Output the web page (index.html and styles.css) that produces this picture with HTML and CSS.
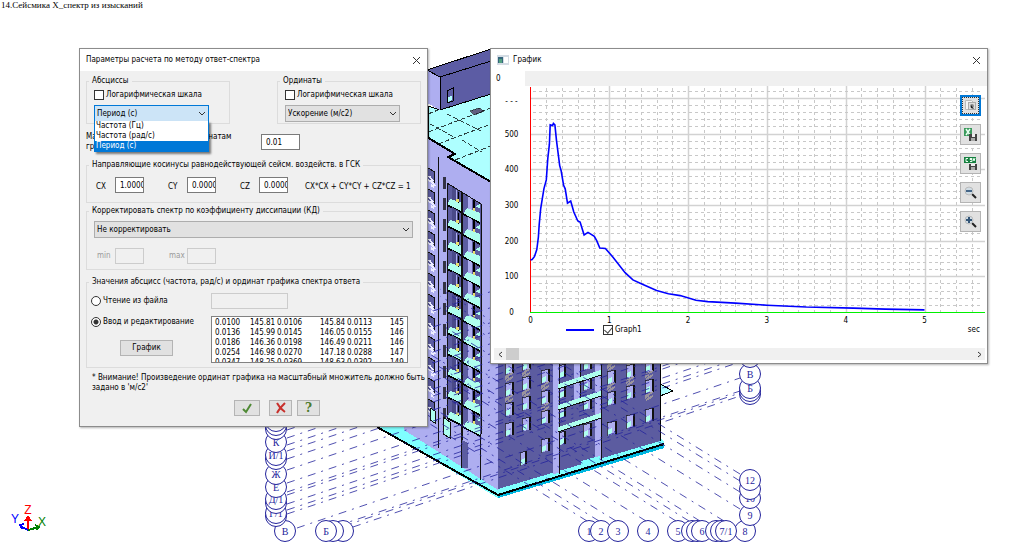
FILE: index.html
```html
<!DOCTYPE html>
<html lang="ru">
<head>
<meta charset="utf-8">
<title>Параметры расчета по методу ответ-спектра</title>
<link rel="stylesheet" href="styles.css">
</head>
<body>
<main class="desktop">
  <svg class="scene" id="scene" aria-hidden="true">
    <g stroke="#000" stroke-width="1">
      <polygon fill="#7fffff" stroke="none" points="376,426 410,426 497,482 660,438 664,441 664,447 498,498"/>
      <path fill="none" stroke="#00b8e0" stroke-width="4" d="M498 496L664 446"/>
      <path fill="none" stroke-width="2" d="M377 427L498 495L664 444"/>
      <polygon fill="#aeffff" points="428,106 440,110 491,92 491,182 455,161 448,157 455,154 428,137"/>
      <path fill="none" stroke-opacity=".75" d="M428 114l10-4M447 114l34 17M428 132l63-24M438 144l53-20M462 140l20 12M455 160l36-14M430 124l24 13" stroke-dasharray="5 2"/>
      <path fill="#606080" d="M470 111l9-3 5 3-10 4z" stroke-opacity=".6"/>
      <polygon fill="#5c5ca4" points="427,70 491,49 491,94 440,110 440,77"/>
      <polygon fill="#aeaef0" stroke="none" points="427,70 440,77 440,110 427,103"/>
      <path fill="none" d="M427 70l13 7 51-16M440 77v33M447 91l6-3v13l-6 2z"/>
      <path fill="#aeffff" stroke="none" d="M448 97l4-1v4l-4 2z"/>
      <polygon fill="#aeaef0" stroke="none" points="427,137 455,154 448,157 455,161 498,186 498,490 404,430 404,426 427,426"/>
      <path fill="none" d="M427 137l28 17-7 3 7 4 43 25" stroke-width="2"/>
      <polygon fill="#5c5ca0" stroke="none" points="498,300 660,300 660,441 498,489"/>
      <path fill="none" d="M660 364v77"/>
      <polygon fill="#aeffff" points="660,384 673,391 660,396"/>
    </g>
    <g id="facade"></g>
    <g id="axes" class="axes"></g>
    <g id="bubbles" class="bubbles"></g>
    <g class="triad" fill="none" stroke-width="2">
      <path stroke="#f00" d="M28 530v-11M25 521l3-4 3 4"/>
      <path stroke="#00f" d="M28 530l-8-4M24 524l-4 1 2 4"/>
      <path stroke="#008000" d="M28 530l11-3M35 525l4 2-3 3"/>
      <text x="28" y="514" fill="#f00">Z</text>
      <text x="15" y="523" fill="#00f">Y</text>
      <text x="42" y="526" fill="#008000">X</text>
    </g>
  </svg>
  <p class="caption">14.Сейсмика X_спектр из изысканий</p>

  <section class="window params" aria-label="Параметры расчета">
    <header class="titlebar">
      <h1>Параметры расчета по методу ответ-спектра</h1>
      <button class="close" aria-label="Закрыть"><svg width="9" height="9"><path d="M1 1l7 7M8 1l-7 7"/></svg></button>
    </header>
    <form class="body">
      <div class="pair">
        <fieldset class="axis">
          <legend>Абсциссы</legend>
          <label class="check"><input type="checkbox">Логарифмическая шкала</label>
          <div class="combo open">
            <select aria-label="Абсциссы"><option>Период (с)</option><option>Частота (Гц)</option><option>Частота (рад/с)</option></select>
            <svg class="chev" width="8" height="5"><path d="M1 1l3 3 3-3"/></svg>
            <ul class="menu" role="listbox">
              <li role="option">Частота (Гц)</li>
              <li role="option">Частота (рад/с)</li>
              <li role="option" class="chosen" aria-selected="true">Период (с)</li>
            </ul>
          </div>
        </fieldset>
        <fieldset class="axis">
          <legend>Ординаты</legend>
          <label class="check"><input type="checkbox">Логарифмическая шкала</label>
          <div class="combo">
            <select aria-label="Ординаты"><option>Ускорение (м/с2)</option></select>
            <svg class="chev" width="8" height="5"><path d="M1 1l3 3 3-3"/></svg>
          </div>
        </fieldset>
      </div>
      <div class="scale">
        <label for="mul">Масштабный множитель к ординатам<br>графика</label>
        <input id="mul" type="text" value="0.01">
      </div>
      <fieldset class="cosines">
        <legend>Направляющие косинусы равнодействующей сейсм. воздейств. в ГСК</legend>
        <label for="cx">CX</label><input id="cx" type="text" value="1.0000">
        <label for="cy">CY</label><input id="cy" type="text" value="0.0000">
        <label for="cz">CZ</label><input id="cz" type="text" value="0.0000">
        <span class="formula">CX*CX + CY*CY + CZ*CZ = 1</span>
      </fieldset>
      <fieldset class="damping">
        <legend>Корректировать спектр по коэффициенту диссипации (КД)</legend>
        <div class="combo">
          <select aria-label="Корректировать спектр"><option>Не корректировать</option></select>
          <svg class="chev" width="8" height="5"><path d="M1 1l3 3 3-3"/></svg>
        </div>
        <div class="limits">
          <label for="min">min</label><input id="min" type="text" disabled>
          <label for="max">max</label><input id="max" type="text" disabled>
        </div>
      </fieldset>
      <fieldset class="values">
        <legend>Значения абсцисс (частота, рад/с) и ординат графика спектра ответа</legend>
        <label class="check"><input type="radio" name="src">Чтение из файла</label>
        <input class="file" type="text" aria-label="Файл" disabled>
        <div class="editing">
          <label class="check"><input type="radio" name="src" checked>Ввод и редактирование</label>
          <button type="button" class="plot-btn">График</button>
        </div>
        <div class="list">
          <table>
            <tr><td>0.0100</td><td>145.81</td><td>0.0106</td><td>145.84</td><td>0.0113</td><td>145</td></tr>
            <tr><td>0.0136</td><td>145.99</td><td>0.0145</td><td>146.05</td><td>0.0155</td><td>146</td></tr>
            <tr><td>0.0186</td><td>146.36</td><td>0.0198</td><td>146.49</td><td>0.0211</td><td>146</td></tr>
            <tr><td>0.0254</td><td>146.98</td><td>0.0270</td><td>147.18</td><td>0.0288</td><td>147</td></tr>
            <tr><td>0.0347</td><td>148.25</td><td>0.0369</td><td>148.63</td><td>0.0392</td><td>149</td></tr>
          </table>
        </div>
      </fieldset>
      <p class="note">* Внимание! Произведение ординат графика на масштабный множитель должно быть<br>задано в 'м/с2'</p>
      <div class="actions">
        <button type="button" class="ok" aria-label="OK"><svg width="12" height="12" fill="none" stroke="#4f8a35" stroke-width="2"><path d="M2 7l3 3 5-8"/></svg></button>
        <button type="button" aria-label="Отмена"><svg width="12" height="12" fill="none" stroke="#c8302c" stroke-width="2"><path d="M2 1c2 4 5 7 8 9M10 1c-3 3-6 6-8 10"/></svg></button>
        <button type="button" class="help" aria-label="Справка">?</button>
      </div>
    </form>
  </section>

  <section class="window graph" aria-label="График">
    <header class="titlebar">
      <svg class="app" width="12" height="10"><path fill="#d4dce4" d="M0 0h12v10H0z"/><path fill="#35667c" d="M1 2h5v6H1z"/><path fill="#52a080" d="M2 4h3v4H2z"/><path fill="#fff" d="M7 2h4v6H7z"/></svg>
      <h2>График</h2>
      <button class="close" aria-label="Закрыть"><svg width="9" height="9"><path d="M1 1l7 7M8 1l-7 7"/></svg></button>
    </header>
    <div class="tabs"><button class="tab">0</button></div>
    <div class="chart">
      <svg id="plot" class="plot" viewBox="0 0 496 239" role="img" aria-label="Graph1"></svg>
      <div class="tools">
        <button class="focused" aria-label="Снимок"><svg width="13" height="13"><path fill="#f4f4f4" stroke="#bbb" d="M1.500 1.500h6l2 2v7h-8z"/><rect x="4.500" y="3.500" width="7" height="7" fill="#ddd" stroke="#aaa"/><circle cx="8" cy="7" r="2" fill="#888"/><path fill="#222" d="M7 6l3 4-3-1z"/></svg></button>
        <button aria-label="Excel"><svg width="13" height="13"><path fill="#3a9a5c" d="M0 0h8v8H0z"/><path stroke="#e8fff0" stroke-width="1.5" d="M2 1l4 6M6 1L2 7"/><path fill="#444" d="M5 6h8v7H5z"/><path fill="#eee" d="M8 6h3v3H8z"/><path fill="#aaa" d="M7 10h4v3H7z"/></svg></button>
        <button aria-label="CSV"><svg width="13" height="13"><path fill="#16803f" d="M0 0h12v6H0z"/><path fill="none" stroke="#e8fff0" d="M4 1.500H2v3h2M8 1.500H6v1h2v2H6M9 1l1 3 1-3"/><path fill="#444" d="M5 7h8v6H5z"/><path fill="#eee" d="M7 7h4v2H7z"/><path fill="#aaa" d="M7 10h4v3H7z"/></svg></button>
        <button aria-label="Уменьшить"><svg width="13" height="13"><path stroke="#222" stroke-width="2" d="M8 8l4 4"/><circle cx="5" cy="5" r="4" fill="#d0dce4" stroke="#bbb"/><path stroke="#468" stroke-width="2" d="M2 5h6"/></svg></button>
        <button aria-label="Увеличить"><svg width="13" height="13"><path stroke="#222" stroke-width="2" d="M8 8l4 4"/><circle cx="5" cy="5" r="4" fill="#d0dce4" stroke="#bbb"/><path stroke="#357" stroke-width="2" d="M2 5h6M5 2v6"/></svg></button>
      </div>
    </div>
    <div class="legend">
      <i class="swatch"></i>
      <label class="check"><input type="checkbox" checked>Graph1</label>
      <span class="unit">sec</span>
    </div>
    <div class="scroll"><button aria-label="Влево"><svg width="5" height="7"><path d="M4 1L1 3.500 4 6"/></svg></button><i class="thumb"></i><button class="right" aria-label="Вправо"><svg width="5" height="7"><path d="M1 1l3 2.500L1 6"/></svg></button></div>
  </section>
</main>
<script src="draw.js"></script>
</body>
</html>
```
FILE: styles.css
```css
* { box-sizing: border-box; }
body {
  margin: 0;
  background: #fff;
  color: #000;
  font: 8px/10px "DejaVu Sans Condensed", "DejaVu Sans", sans-serif;
}
.desktop { position: relative; min-height: 100vh; overflow: hidden; }
.scene { position: absolute; inset: 0; width: 100%; height: 100%; shape-rendering: crispEdges; }
.axes { fill: none; stroke: #24249c; stroke-opacity: .8; stroke-dasharray: 8 6 2 6; shape-rendering: auto; }
.bubbles circle { fill: #fff; stroke: #24249c; shape-rendering: auto; }
.bubbles text { fill: #24249c; font: 10px "Liberation Serif", serif; text-anchor: middle; }
.triad text { font: 12px "Liberation Sans", sans-serif; text-anchor: middle; stroke: none; }
.caption { position: relative; margin: 0; padding-left: 1px; font: 9px/10px "Liberation Serif", serif; }

button, input, select { font: inherit; color: inherit; margin: 0; }
button { padding: 0; border: 1px solid #b4b4b4; background: #e1e1e1; display: inline-flex; align-items: center; justify-content: center; }
input[type="text"] { height: 16px; padding: 0 0 0 4px; border: 1px solid #7a7a7a; background: #fff; flex: none; border-radius: 0; }
input[type="text"]:disabled { background: #f0f0f0; border-color: #ccc; }

.window { position: absolute; top: 48px; border: 1px solid #8c8c8c; background: #f0f0f0; box-shadow: 1px 1px 2px rgba(0, 0, 0, .3); }
.params { left: 79px; width: 349px; }
.graph { left: 490px; width: 498px; background: #fff; }
.titlebar { display: flex; align-items: center; height: 22px; padding: 0 6px; background: #fff; }
.titlebar h1, .titlebar h2 { margin: 0; font: inherit; }
.close { margin-left: auto; border: 0; background: none; }
.close svg, .chev, .scroll svg { fill: none; stroke: #333; }
.app { margin-right: 4px; }

.body { padding: 5px 6px 10px; }
fieldset { margin: 0; min-width: 0; padding: 0 7px; border: 1px solid #dcdcdc; }
legend { margin-left: -5px; padding: 0 3px; line-height: 10px; }
.pair { display: flex; justify-content: space-between; }
.axis { width: 144px; padding: 4px 7px 1px; }
.axis .combo { width: 115px; margin-top: 5px; }
.check { display: flex; align-items: center; gap: 2px; height: 10px; white-space: nowrap; }
.check input { appearance: none; display: grid; place-content: center; width: 10px; height: 10px; border: 1px solid #333; background: #fff; flex: none; }
.check input[type="radio"] { border-radius: 50%; }
.check input[type="radio"]:checked { background: radial-gradient(circle, #333 0 2px, #fff 3px); }
.check input[type="checkbox"]:checked::after { content: ""; width: 4px; height: 7px; margin-bottom: 2px; border: solid #444; border-width: 0 1px 1px 0; transform: rotate(40deg); }

.combo { position: relative; }
.combo select { display: block; width: 100%; height: 17px; padding: 0 2px; border: 1px solid #adadad; border-radius: 0; background: #e1e1e1; appearance: none; }
.open select { background: #cce4f7; border-color: #0078d7; }
.chev { position: absolute; right: 3px; top: 6px; }
.menu { position: absolute; z-index: 1; left: 0; right: 0; top: 16px; margin: 0; padding: 0; list-style: none; background: #fff; border: 1px solid #0078d7; border-width: 0 1px 1px; box-shadow: 2px 2px 2px rgba(0, 0, 0, .5); }
.menu li { padding-left: 1px; }
.menu .chosen { background: #0078d7; color: #fff; }

.scale { display: flex; align-items: center; margin-top: 8px; }
.scale label { width: 175px; white-space: nowrap; }
.scale input { width: 39px; }
.cosines { margin-top: 8px; padding: 7px 7px 9px; display: flex; align-items: flex-start; }
.cosines label { flex: none; padding: 5px 0 0 2px; width: 21px; }
.cosines input, .limits input { width: 29px; margin-right: 22px; }
.formula { margin-left: -5px; padding-top: 5px; white-space: nowrap; }
.damping { margin-top: 3px; padding: 5px 7px 5px; }
.limits { display: flex; align-items: center; margin-top: 10px; color: #9a9a9a; }
.limits label { flex: none; width: 21px; padding-left: 3px; }
.values { display: grid; grid-template-columns: 120px 197px; row-gap: 7px; margin-top: 7px; padding: 6px 4px 4px; }
.values legend { margin-left: -2px; }
.values > .check { margin-top: 3px; }
.file { width: 77px; }
.editing .check { margin-top: 1px; }
.plot-btn { width: 53px; height: 16px; margin: 13px 0 0 29px; }
.list { height: 47px; padding: 1px 3px; background: #fff; border: 1px solid #828282; overflow: hidden; }
.list table { border-collapse: collapse; table-layout: fixed; width: 190px; }
.list td { padding: 0; width: 35px; white-space: nowrap; }
.list td:nth-child(2) { width: 27px; }
.list td:nth-child(3), .list td:nth-child(5) { width: 43px; }
.list td:nth-child(4) { width: 27px; }
.note { margin: 5px 0 0; padding: 0 0 0 6px; white-space: nowrap; }
.actions { display: flex; justify-content: center; margin-top: 7px; padding-left: 47px; }
.actions button { width: 23px; height: 16px; margin-right: 5px; }
.actions .ok { width: 26px; margin-right: 9px; }
.actions .help { margin-right: 0; color: #4d7a2c; font: bold 12px/12px "DejaVu Serif", serif; }

.tabs { display: flex; height: 15px; background: #f0f0f0; }
.tab { width: 34px; border: 0; background: #fff; justify-content: flex-start; padding-left: 5px; }
.chart { position: relative; }
.plot { display: block; width: 100%; }
.plot text { text-anchor: middle; }
.tools { position: absolute; right: 6px; top: 9px; display: flex; flex-direction: column; gap: 8px; }
.tools button { width: 21px; height: 21px; }
.tools .focused { border: 2px solid #0078d7; outline: 1px dotted #333; outline-offset: -3px; }
.legend { display: flex; align-items: center; padding: 0 7px 0 75px; }
.legend .check { margin-left: 9px; }
.swatch { width: 28px; height: 2px; background: #00f; }
.unit { margin-left: auto; }
.scroll { display: flex; align-items: stretch; height: 12px; margin: 13px 2px 3px 3px; background: #f0f0f0; }
.scroll button { width: 12px; border: 0; background: none; }
.scroll .right { margin-left: auto; }
.thumb { width: 13px; background: #cdcdcd; }
```
FILE: draw.js
```js
const out = (id, html) => { document.getElementById(id).innerHTML = html; };
const poly = (pts, fill, extra = '') => `<polygon points="${pts}" fill="${fill}" ${extra}/>`;
const line = (x1, y1, x2, y2, extra = '') => `<path d="M${x1} ${y1}L${x2} ${y2}" ${extra}/>`;

// Building facades
let f = '';
const wall = '#5c5ca0', lav = '#aeaef0', slab = '#aeffee';
f += poly('447,183 481,204 481,434 447,415', wall);
for (let k = 0; k < 13; k++) {
  const y = 168 + k * 21;
  if (y < 410) {
    f += poly(`428,${y} 435,${y + 4} 435,${y + 15} 428,${y + 11}`, wall);
    f += `<path d="M428 ${y}l7 4M434.500 ${y + 4}v11" stroke="#111" fill="none"/>`;
    f += `<path d="M428 ${y + 12}l4 2 3 4M429 ${y + 8}l4 5M431 ${y + 17}l3 2" stroke="#eef" stroke-width="2" fill="none"/>`;
    f += `<path d="M444.500 ${y + 9}v12" stroke="#334" stroke-width="3"/>`;
  }
}
for (let k = 0; k < 11; k++) {
  const y = Math.round(204 + k * 21.3);
  f += poly(`452,${y - 18} 460,${y - 13} 460,${y} 452,${y - 4}`, '#4a4a88');
  f += poly(`468,${y - 8} 472,${y - 6} 472,${y + 8} 468,${y + 5}`, lav);
  f += poly(`450,${y - 5} 461,${y - 2} 461,${y + 7} 447,${y + 1}`, slab);
  f += poly(`467,${y + 4} 480,${y + 9} 480,${y + 19} 463,${y + 10}`, slab);
  f += line(447, y + 1, 461, y + 8, 'stroke="#000" stroke-width="1.5"') + line(463, y + 10, 480, y + 19, 'stroke="#000" stroke-width="1.5"');
  f += line(456.5, y - 14, 456.5, y - 4, `stroke="${lav}" stroke-width="1"`);
  f += line(458.5, y - 12, 458.5, y - 1, 'stroke="#000" stroke-width="1"');
  f += line(473.5, y - 5, 473.5, y + 7, 'stroke="#000" stroke-width="2"');
  f += `<path d="M456 ${y - 5}h3v3h-3zM473 ${y + 4}h2v3h-2z" fill="#e8e070"/>`;
  f += `<path d="M475 ${y + 3}l5-3v4z" fill="${slab}"/>`;
}
f += '<path d="M461.500 192V468" stroke="#111" fill="none" stroke-width="2"/>';
f += '<path d="M447 183L481 204V434M447.500 183V415M438.500 157V448M480.500 434V480" stroke="#111" fill="none"/>';
f += poly('462,440 468,443 468,468 462,468', wall);
f += poly('443,417 450,422 450,438 443,434', slab, 'stroke="#111"');
f += poly('430,408 435,411 435,423 430,420', slab, 'stroke="#111"');

const win = (x, y, w = 8) => poly(`${x},${y + 2} ${x + w},${y} ${x + w},${y + 12} ${x},${y + 15}`, lav)
  + poly(`${x + 1},${y + 9} ${x + 5},${y + 7} ${x + 5},${y + 12} ${x + 1},${y + 14}`, slab)
  + `<path d="M${x} ${y + 15}V${y + 2}L${x + w} ${y}" fill="none" stroke="#111" stroke-opacity=".7"/>`
  + line(x + w, y, x + w, y + 13, 'stroke="#111" stroke-width="2"');
const smudge = (x, y) => `<path d="M${x} ${y}l8-4M${x + 1} ${y + 4}l7-4M${x} ${y + 2}l4-3" stroke="#99939d" stroke-width="2"/>`;
[[505, [360, 382, 402, 422]], [522, [356, 376, 396, 417]], [541, [369, 390, 410, 438]],
 [607, [349, 370, 391, 421]], [626, [344, 364, 385, 414]], [645, [358, 379, 408]]].forEach(([x, ys]) =>
  ys.forEach((y, i) => { f += win(x, y); if (i < 2) f += smudge(x, y + 17); }));
f += win(520, 451, 6) + win(607, 421, 9);
[364, 384, 404, 431].forEach(y => { f += win(559, y, 6) + win(583, y - 8, 8); });
[[553, 474], [595, 460], [574, 400]].forEach(([x, b]) => {
  f += `<path d="M${x} 360h6V${b - 1}l-6 1z" fill="${lav}"/>` + line(x + 6, 360, x + 6, b, 'stroke="#111"');
});
[384, 405, 427].forEach(y => { f += poly(`558,${y} 601,${y - 14} 601,${y - 9} 558,${y + 5}`, slab) + line(558, y + 5, 601, y - 9, 'stroke="#111"'); });
f += poly('581,461 600,456 600,459 581,466', '#7fffff');
out('facade', f);

// Building axes
let a = '';
[364, 380, 395, 405, 416, 426, 434, 442, 449, 455, 463, 474, 487, 496, 499, 508, 514, 518].forEach(y => { a += line(287, y - 4, 740, y - 156); });
[[297, 528, 740, 378], [337, 526, 740, 391], [344, 526, 740, 393], [353, 527, 740, 396]].forEach(p => { a += line(...p); });
[589, 601, 618, 648, 678, 691, 702, 726].forEach(x => { a += line(x - 2, 521, x - 282, 348); });
[480, 487, 498, 515].forEach(y => { a += line(740, y - 6, 440, y - 191); });
out('axes', a);

const marks = [
  [343, 531, ''], [333, 531, ''], [326, 531, 'Б'], [285, 531, 'В'],
  [276, 516, ''], [276, 513, 'Г/1'], [276, 503, ''], [276, 499, 'Д/1'], [276, 487, 'Е'], [276, 474, 'Ж'], [276, 459, ''], [276, 455, 'И/1'], [276, 442, 'К'], [276, 429, ''], [276, 425, ''], [276, 421, ''],
  [589, 531, '1'], [601, 531, '2'], [618, 531, '3'], [648, 531, '4'], [678, 531, '5'], [692, 531, ''], [697, 531, ''], [702, 531, '6'],
  [745, 531, '8'], [716, 531, ''], [721, 531, ''], [726, 531, '7/1'],
  [750, 515, '9'], [750, 498, '10'], [750, 489, ''], [750, 480, '12'],
  [750, 394, ''], [750, 391, ''], [750, 388, 'Б'], [750, 374, 'В'], [750, 357, '']
];
out('bubbles', marks.map(([x, y, t]) => `<circle cx="${x}" cy="${y}" r="10.5"/><text x="${x}" y="${y + 4}">${t}</text>`).join(''));

// Spectrum chart, origin at (39.5, 226)
const X = v => 39.5 + v * 78.8, Y = v => 226 - v * 0.357;
let p = '';
for (let i = 1; i <= 28; i++) {
  const x = Math.round(X(i / 5)) + 0.5;
  p += i % 5 ? line(x, 2, x, 226, 'stroke="#c8c8c8" stroke-dasharray="3 3"') : line(x, 0, x, 226, 'stroke="#d2d2d2" stroke-width="1.5"');
}
for (let i = 1; i <= 31; i++) {
  const y = Math.round(Y(i * 20)) + 0.5;
  p += i % 5 ? line(42, y, 492, y, 'stroke="#c8c8c8" stroke-dasharray="3 3"') : line(40, y, 494, y, 'stroke="#d2d2d2" stroke-width="1.5"');
}
p += line(39, 226.5, 494, 226.5, 'stroke="#00f000" stroke-width="1"') + line(39.5, 1, 39.5, 226, 'stroke="#f00"');
const curve = [[0, 146], [.02, 147], [.05, 155], [.08, 175], [.1, 210], [.11, 245], [.13, 290], [.17, 345], [.2, 370], [.22, 430], [.24, 470], [.25, 524], [.28, 522], [.29, 528], [.31, 524], [.33, 480], [.37, 410], [.39, 395], [.42, 355], [.44, 345], [.47, 305], [.51, 311], [.55, 280], [.6, 255], [.63, 252], [.68, 216], [.73, 223], [.81, 212], [.84, 200], [.88, 179], [.95, 178], [1.05, 153], [1.2, 110], [1.3, 90], [1.42, 78], [1.6, 60], [1.75, 51], [1.9, 46], [2.1, 33], [2.25, 29], [2.6, 25], [3, 19], [3.5, 14], [4.1, 11], [4.5, 8], [5, 6]];
p += `<path d="M${curve.map(([x, y]) => X(x).toFixed(1) + ' ' + Y(y).toFixed(1)).join('L')}" fill="none" stroke="#00f" stroke-width="1.6"/>`;
for (let i = 0; i <= 5; i++) p += `<text x="${X(i)}" y="237">${i}</text><text x="20.500" y="${Y(i * 100) + 3}">${i * 100}</text>`;
p += '<text x="20.500" y="18">- - -</text>';
out('plot', p);
```
